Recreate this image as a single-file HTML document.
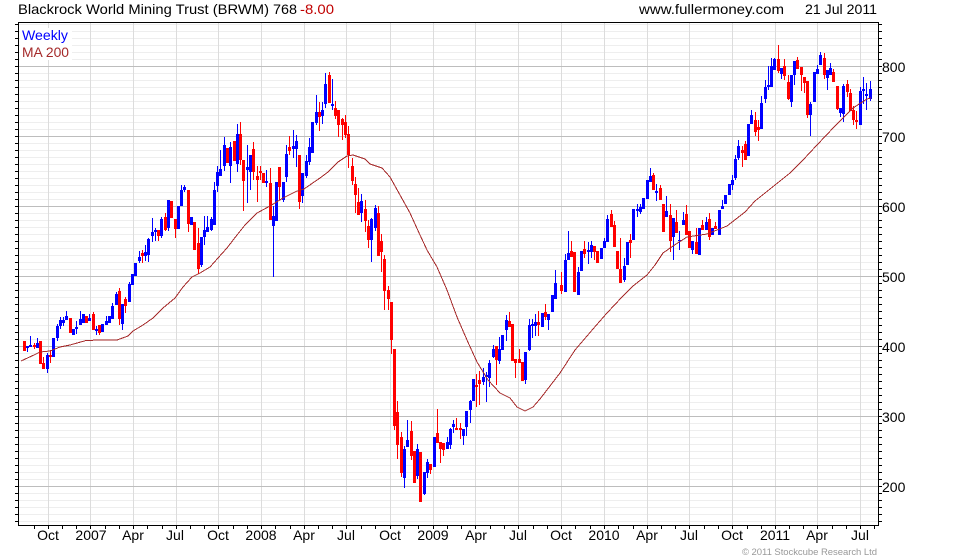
<!DOCTYPE html>
<html><head><meta charset="utf-8"><style>
html,body{margin:0;padding:0;background:#fff;width:960px;height:560px;overflow:hidden}
svg{display:block}
text{font-family:"Liberation Sans",Arial,sans-serif;font-size:14px;fill:#000}
.c{text-anchor:middle}
</style></head><body>
<svg width="960" height="560" viewBox="0 0 960 560" xmlns="http://www.w3.org/2000/svg">
<defs>
<pattern id="mn" patternUnits="userSpaceOnUse" x="0" y="3" width="10" height="7"><rect width="10" height="1" fill="#eeeeee"/></pattern>
<pattern id="tk" patternUnits="userSpaceOnUse" x="0" y="3" width="10" height="7"><rect width="10" height="1" fill="#000"/></pattern>
</defs>
<rect width="960" height="560" fill="#fff"/>
<rect x="19" y="23" width="859" height="502" fill="url(#mn)"/>
<g shape-rendering="crispEdges">
<path stroke="#dcdcdc" fill="none" d="M48.500 23V525M90.500 23V525M133.500 23V525M176.500 23V525M218.500 23V525M261.500 23V525M304.500 23V525M346.500 23V525M390.500 23V525M433.500 23V525M475.500 23V525M518.500 23V525M561.500 23V525M604.500 23V525M647.500 23V525M689.500 23V525M732.500 23V525M775.500 23V525M817.500 23V525M860.500 23V525"/>
<path stroke="#bdbdbd" fill="none" d="M19 66.500H878M19 136.500H878M19 206.500H878M19 276.500H878M19 346.500H878M19 416.500H878M19 486.500H878"/>
<rect x="20" y="28" width="52" height="32" fill="#fff"/>
<g transform="translate(.5 0)">
<path fill="none" stroke="#00f" stroke-width="1" d="M30 336V347M27 346V352M37 338V348M47 353V373M57 324V341M60 317V329M63 317V326M66 311V320M76 321V334M80 311V325M89 314V321M96 326V335M106 316V325M112 303V319M116 292V305M122 304V330M129 282V302M139 251V263M145 245V261M148 238V262M152 218V242M155 228V241M161 217V238M168 200V231M181 185V206M184 185V192M201 237V267M204 216V245M207 216V232M211 217V231M214 182V225M217 166V192M220 150V176M224 137V171M230 142V183M237 124V172M247 145V203M250 155V190M266 170V187M273 206V277M283 182V202M286 145V182M293 130V158M296 135V167M302 173V203M306 155V178M309 138V165M316 95V125M322 102V124M325 73V108M332 79V110M361 194V222M371 218V262M375 205V231M404 446V488M407 420V447M417 444V479M424 472V495M427 459V478M447 437V449M450 428V449M453 420V433M463 429V445M466 411V436M470 400V423M483 368V385M486 372V402M489 360V387M493 345V358M499 337V364M506 315V341M525 352V384M529 319V351M532 319V338M535 314V336M548 314V330M555 270V299M565 254V292M568 231V260M578 267V295M588 242V264M591 241V258M604 238V248M607 215V242M624 258V282M637 204V217M640 204V214M650 168V182M656 184V201M666 196V217M673 218V260M679 231V250M683 212V225M692 241V254M706 217V230M722 200V209M732 175V190M735 155V180M738 140V160M751 110V124M761 96V129M765 80V103M768 66V90M771 58V87M774 58V70M781 68V79M791 75V107M794 61V85M810 102V136M817 65V74M820 52V65M827 70V90M830 63V75M840 108V117M843 84V122M860 87V125M863 77V104M866 83V110M870 81V101"/>
<path fill="none" stroke="#00f" stroke-width="3" d="M27 346V348M30 345V347M37 343V348M47 355V369M53 338V357M57 326V338M60 320V326M63 320V323M66 316V320M73 329V335M76 327V329M80 319V325M83 314V323M89 318V321M96 329V331M102 324V332M106 321V325M109 316V323M112 306V319M116 294V305M122 304V324M129 284V302M132 274V285M135 263V276M139 257V261M145 252V256M148 239V255M152 232V236M155 230V232M161 219V236M168 200V228M178 206V229M181 190V206M184 187V190M191 217V225M201 237V265M204 230V237M207 227V232M211 219V230M214 190V225M217 172V186M220 169V176M224 145V166M230 147V166M237 134V164M247 167V170M250 155V172M266 181V183M273 216V226M276 182V221M283 182V200M286 154V177M293 146V149M296 141V149M302 173V196M306 161V176M309 147V162M312 122V153M316 112V123M322 110V116M325 84V104M332 104V106M361 201V213M371 219V240M375 208V228M404 449V478M407 440V447M417 449V476M424 472V494M427 462V473M434 437V467M447 442V449M450 429V445M453 424V427M463 429V436M466 411V427M470 401V410M473 379V401M483 377V382M486 375V377M489 363V378M493 349V357M499 349V361M502 335V350M506 320V330M525 352V380M529 325V350M532 324V326M535 322V326M542 313V327M548 314V320M552 295V312M555 283V299M565 260V292M568 253V260M578 272V295M581 251V271M588 250V252M591 245V252M601 248V259M604 241V248M607 219V242M624 266V280M627 242V265M633 209V240M637 209V211M640 207V212M643 198V209M647 180V199M650 176V182M656 191V193M666 211V217M673 218V237M679 240V241M683 220V225M692 241V250M699 228V255M706 222V230M712 228V235M719 210V235M722 206V209M725 195V204M729 184V195M732 180V185M735 159V178M738 146V158M748 124V156M751 115V124M761 103V129M765 87V99M768 85V87M771 66V87M774 59V70M781 68V74M791 75V102M794 61V75M810 104V115M814 72V102M817 69V74M820 55V65M827 70V78M830 68V75M840 108V113M843 86V114M860 91V125M863 89V91M866 94V96M870 89V99"/>
<path fill="none" stroke="#f00" stroke-width="1" d="M34 343V349M43 357V369M50 350V363M93 312V330M99 325V335M119 288V325M125 297V313M142 250V263M158 230V241M165 213V231M175 219V238M188 190V232M198 228V274M240 122V165M243 160V211M253 142V180M257 166V202M260 166V180M270 168V220M279 167V200M289 136V155M299 155V209M319 102V131M329 72V103M335 101V119M338 110V137M342 118V140M345 115V138M348 126V168M352 158V185M355 177V213M358 188V215M365 200V232M368 220V248M378 206V256M381 234V272M384 255V310M388 286V310M391 302V354M394 349V430M397 401V459M401 432V477M411 421V460M430 464V474M437 409V443M440 442V463M443 443V456M456 418V430M460 423V439M476 374V407M479 371V405M496 346V385M509 312V327M515 359V378M519 349V363M538 311V336M545 304V320M561 272V294M571 241V257M584 241V258M594 246V260M611 210V227M614 221V247M620 238V283M630 234V258M653 173V190M660 185V200M670 204V252M676 210V233M686 205V235M696 228V254M702 220V230M709 213V240M715 222V229M742 146V167M745 141V160M755 112V136M758 120V141M778 45V73M784 59V80M788 75V100M797 57V69M801 67V91M804 77V93M807 81V118M824 53V79M833 69V82M837 86V110M847 80V97M850 89V111M853 106V125M856 111V129"/>
<path fill="none" stroke="#f00" stroke-width="3" d="M24 341V351M34 345V347M40 341V364M43 363V369M50 355V357M70 318V333M86 316V323M93 314V330M99 325V333M119 291V319M125 299V306M142 253V256M158 230V236M165 217V230M171 201V218M175 219V229M188 190V224M194 222V250M198 243V269M227 148V163M234 141V161M240 134V160M243 160V181M253 149V172M257 176V180M260 171V173M263 173V183M270 183V220M279 167V187M289 147V151M299 155V202M319 112V117M329 75V103M335 108V116M338 110V125M342 119V125M345 122V135M348 134V155M352 166V181M355 184V195M358 202V215M365 209V221M368 226V240M378 213V256M381 241V252M384 259V291M388 290V299M391 302V340M394 349V426M397 412V445M401 437V473M411 431V456M414 451V483M420 452V502M430 464V470M437 433V443M440 442V449M443 443V450M456 428V430M460 428V430M476 385V387M479 380V384M496 346V360M509 321V327M512 324V361M515 359V363M519 359V363M522 362V381M538 322V325M545 312V317M561 285V291M571 251V257M574 252V292M584 249V254M594 246V252M597 251V263M611 214V227M614 225V247M617 251V269M620 269V283M630 240V243M653 175V190M660 188V200M663 204V232M670 215V241M676 222V233M686 214V235M689 231V248M696 242V254M702 225V230M709 219V237M715 226V229M742 150V153M745 144V160M755 120V132M758 127V130M778 59V71M784 66V76M788 82V99M797 60V69M801 67V75M804 77V83M807 81V115M824 58V75M833 72V82M837 86V109M847 84V92M850 93V111M853 110V120M856 120V122"/>
</g>
<polyline fill="none" stroke="#a52a2a" stroke-width="1" points="21,361 34,355 40,352 50,351 60,347 70,345 86,340.500 100,340 117,340 128,336 133,331 143,325 153,318 163,308 175,298 183,287 192,277 200,273 210,267 218,258 227,248 237,235 245,225 257,213 270,206 283,198 297,191 304,189 320,178 328,172 338,162 347,156 353,155 365,159 370,164 382,168 390,177 400,195 410,213 420,235 427,250 437,267 447,290 457,317 467,340 477,362 488,380 500,393 510,398 517,407 525,411 533,407 540,399 560,373 575,350 593,329 607,313 622,297 633,286 647,275 655,265 663,253 673,246 687,237 707,234 727,226 745,212 755,201 770,189 790,173 803,160 817,145 835,126 853,108 867,99 871,98"/>
<rect x="18" y="22" width="861" height="1" fill="#000"/>
<rect x="18" y="525" width="861" height="1" fill="#000"/>
<rect x="18" y="22" width="1" height="504" fill="#000"/>
<rect x="878" y="22" width="1" height="504" fill="#000"/>
<rect x="15" y="23" width="3" height="502" fill="url(#tk)"/>
<rect x="879" y="23" width="3" height="502" fill="url(#tk)"/>
<path stroke="#000" fill="none" d="M34.500 526V529M48.500 526V529M62.500 526V529M76.500 526V529M90.500 526V529M105.500 526V529M119.500 526V529M133.500 526V529M147.500 526V529M162.500 526V529M176.500 526V529M190.500 526V529M204.500 526V529M218.500 526V529M233.500 526V529M247.500 526V529M261.500 526V529M275.500 526V529M290.500 526V529M304.500 526V529M318.500 526V529M332.500 526V529M346.500 526V529M361.500 526V529M375.500 526V529M390.500 526V529M404.500 526V529M418.500 526V529M433.500 526V529M447.500 526V529M461.500 526V529M475.500 526V529M490.500 526V529M504.500 526V529M518.500 526V529M533.500 526V529M547.500 526V529M561.500 526V529M575.500 526V529M590.500 526V529M604.500 526V529M618.500 526V529M633.500 526V529M647.500 526V529M661.500 526V529M675.500 526V529M689.500 526V529M704.500 526V529M718.500 526V529M732.500 526V529M747.500 526V529M761.500 526V529M775.500 526V529M789.500 526V529M803.500 526V529M817.500 526V529M832.500 526V529M846.500 526V529M860.500 526V529M874.500 526V529"/>
</g>
<text x="18" y="14" textLength="251" lengthAdjust="spacingAndGlyphs">Blackrock World Mining Trust (BRWM)</text>
<text x="273" y="14" textLength="24" lengthAdjust="spacingAndGlyphs">768</text>
<text x="300" y="14" textLength="34" lengthAdjust="spacingAndGlyphs" style="fill:#c00000">-8.00</text>
<text x="639" y="14" textLength="145" lengthAdjust="spacingAndGlyphs">www.fullermoney.com</text>
<text x="805" y="14" textLength="72" lengthAdjust="spacingAndGlyphs">21 Jul 2011</text>
<text x="22" y="40" textLength="46" lengthAdjust="spacingAndGlyphs" style="fill:#0000ff">Weekly</text>
<text x="22" y="57" textLength="47" lengthAdjust="spacingAndGlyphs" style="fill:#a52a2a">MA 200</text>
<text x="882" y="72">800</text>
<text x="882" y="142">700</text>
<text x="882" y="212">600</text>
<text x="882" y="282">500</text>
<text x="882" y="352">400</text>
<text x="882" y="422">300</text>
<text x="882" y="492">200</text>
<text class="c" x="48" y="540">Oct</text>
<text class="c" x="91" y="540">2007</text>
<text class="c" x="133" y="540">Apr</text>
<text class="c" x="175" y="540">Jul</text>
<text class="c" x="218" y="540">Oct</text>
<text class="c" x="261" y="540">2008</text>
<text class="c" x="304" y="540">Apr</text>
<text class="c" x="346" y="540">Jul</text>
<text class="c" x="390" y="540">Oct</text>
<text class="c" x="433" y="540">2009</text>
<text class="c" x="476" y="540">Apr</text>
<text class="c" x="518" y="540">Jul</text>
<text class="c" x="561" y="540">Oct</text>
<text class="c" x="604" y="540">2010</text>
<text class="c" x="647" y="540">Apr</text>
<text class="c" x="689" y="540">Jul</text>
<text class="c" x="732" y="540">Oct</text>
<text class="c" x="775" y="540">2011</text>
<text class="c" x="817" y="540">Apr</text>
<text class="c" x="860" y="540">Jul</text>
<text x="742" y="555" textLength="135" lengthAdjust="spacing" style="font-size:9.500px;fill:#999">© 2011 Stockcube Research Ltd</text>
</svg>
</body></html>
